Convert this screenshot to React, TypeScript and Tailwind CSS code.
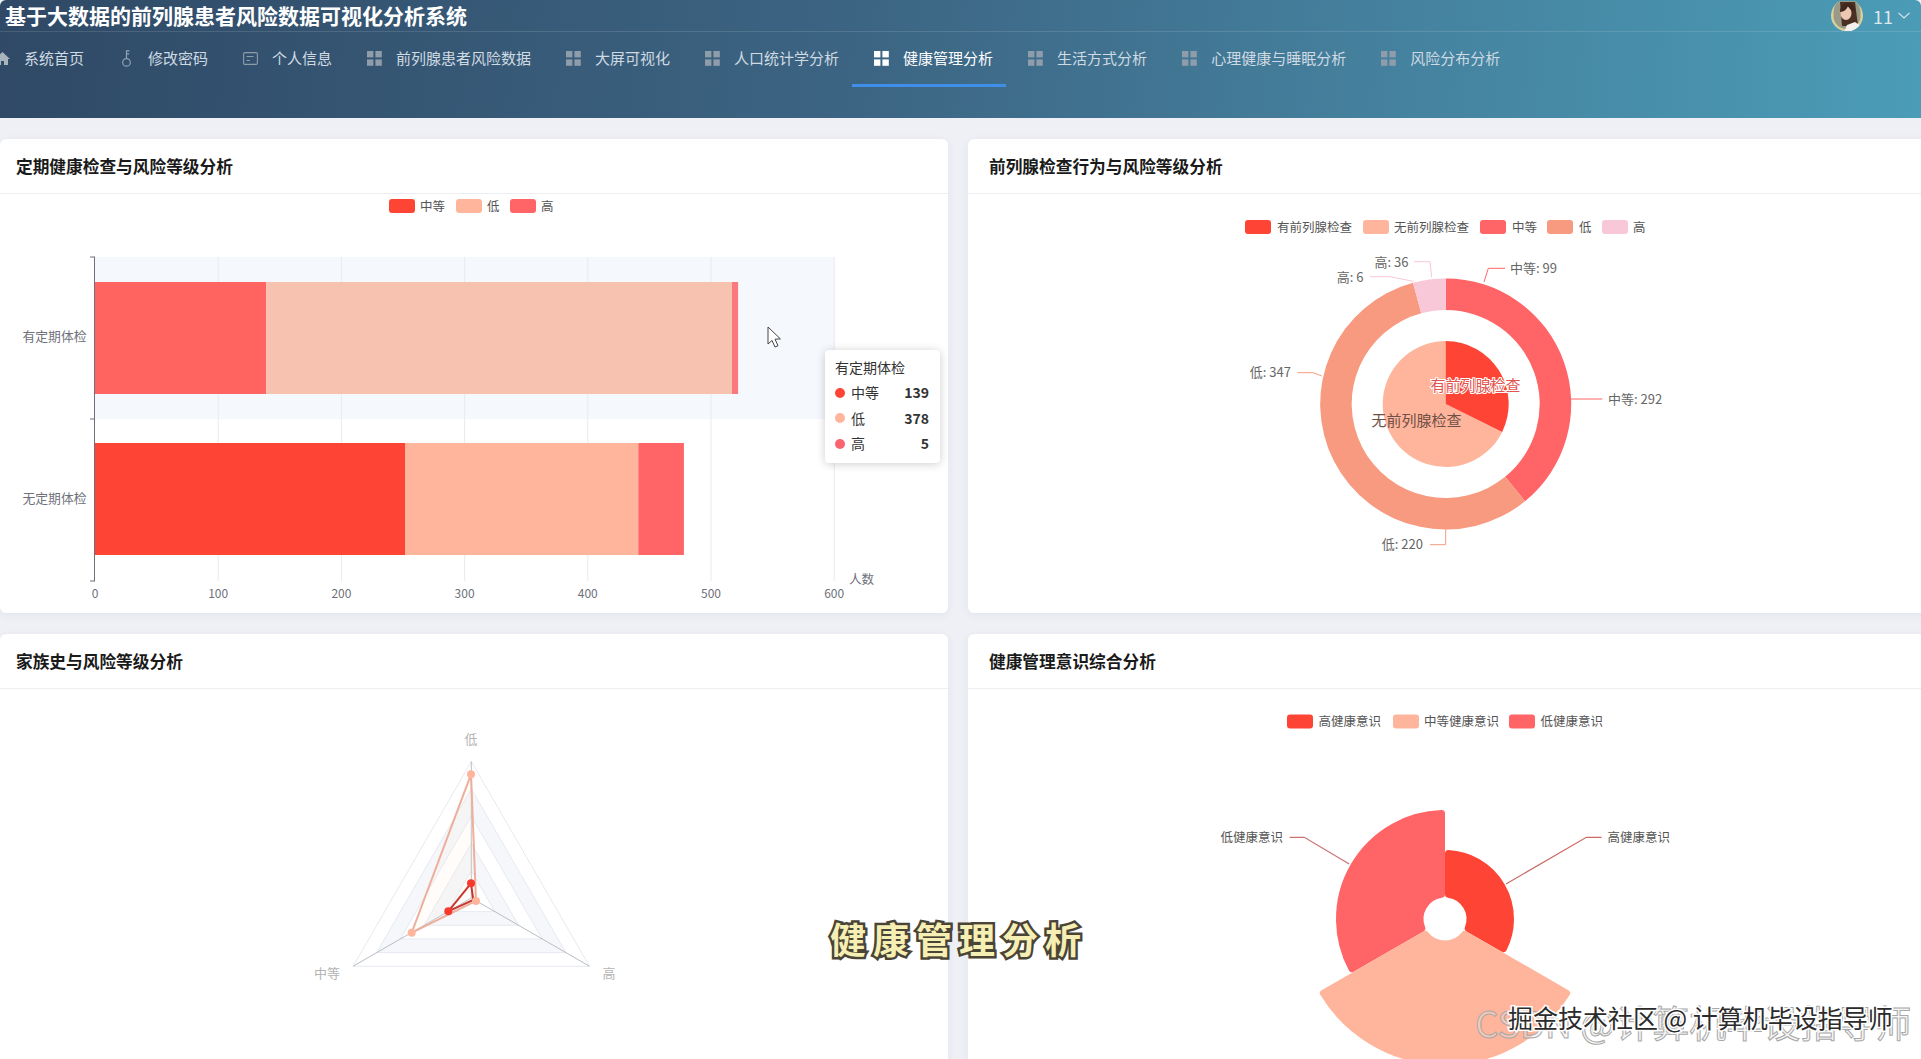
import type { ReactNode } from "react";

const RED = "#fe4535";
const SALMON = "#ffb59c";
const CORAL = "#ff6466";
const ORANGE = "#f79a7f";
const PINK = "#f9c8d8";
const AXIS = "#6e7079";

// angle in degrees, clockwise from twelve o'clock
function polar(cx: number, cy: number, r: number, deg: number) {
  const a = (deg * Math.PI) / 180;
  return [cx + r * Math.sin(a), cy - r * Math.cos(a)];
}

function ring(cx: number, cy: number, r0: number, r1: number, a0: number, a1: number) {
  const large = a1 - a0 > 180 ? 1 : 0;
  const [x0, y0] = polar(cx, cy, r1, a0);
  const [x1, y1] = polar(cx, cy, r1, a1);
  if (r0 === 0) return `M${cx} ${cy}L${x0} ${y0}A${r1} ${r1} 0 ${large} 1 ${x1} ${y1}Z`;
  const [x2, y2] = polar(cx, cy, r0, a1);
  const [x3, y3] = polar(cx, cy, r0, a0);
  return `M${x0} ${y0}A${r1} ${r1} 0 ${large} 1 ${x1} ${y1}L${x2} ${y2}A${r0} ${r0} 0 ${large} 0 ${x3} ${y3}Z`;
}

// shrunk sector, stroked with a round join by the caller to get soft corners
function softSector(cx: number, cy: number, r0: number, r1: number, a0: number, a1: number, d: number) {
  const inner = r0 + d;
  const outer = r1 - d;
  const edge = (r: number, deg: number, side: number) => {
    const along = Math.sqrt(r * r - d * d);
    const [x, y] = polar(cx, cy, along, deg);
    const [nx, ny] = polar(0, 0, d, deg + side * 90);
    return [x + nx, y + ny];
  };
  const p0 = edge(outer, a0, 1);
  const p1 = edge(outer, a1, -1);
  const p2 = edge(inner, a1, -1);
  const p3 = edge(inner, a0, 1);
  return `M${p0[0]} ${p0[1]}A${outer} ${outer} 0 0 1 ${p1[0]} ${p1[1]}L${p2[0]} ${p2[1]}A${inner} ${inner} 0 0 0 ${p3[0]} ${p3[1]}Z`;
}

function tri(cx: number, cy: number, r: number) {
  return [0, 120, 240].map((a) => polar(cx, cy, r, a).join(",")).join(" ");
}

function Legend({ items, y, textY }: { items: { x: number; tx: number; color: string; label: string }[]; y: number; textY: number }) {
  return (
    <g>
      {items.map((it) => (
        <g key={it.label}>
          <rect x={it.x} y={y} width={26} height={14} rx={3} fill={it.color} />
          <text x={it.tx} y={textY} fontSize={12.5} fill="#555" dominantBaseline="central">
            {it.label}
          </text>
        </g>
      ))}
    </g>
  );
}

function GridIcon({ active }: { active?: boolean }) {
  return (
    <svg width="15" height="15" viewBox="0 0 15 15" className="shrink-0" fill={active ? "#ffffff" : "#8f9caa"}>
      <rect x="0" y="0" width="6.4" height="6.4" />
      <rect x="8.4" y="0" width="6.4" height="6.4" />
      <rect x="0" y="8.4" width="6.4" height="6.4" />
      <rect x="8.4" y="8.4" width="6.4" height="6.4" />
    </svg>
  );
}

function HomeIcon() {
  return (
    <svg width="15" height="15" viewBox="0 0 15 15" className="shrink-0" fill="#a9b3bc">
      <path d="M7.5 1 15 8h-2v6H9V10H6v4H2V8H0Z" />
    </svg>
  );
}

function KeyIcon() {
  return (
    <svg width="15" height="17" viewBox="0 0 15 17" className="shrink-0" fill="none" stroke="#8fa2b5" strokeWidth="1.2">
      <circle cx="7.5" cy="12.4" r="3.8" />
      <path d="M7.5 8.6V.8h3M7.5 3.8h2.6" />
    </svg>
  );
}

function CardIcon() {
  return (
    <svg width="15" height="13" viewBox="0 0 15 13" className="shrink-0" fill="none" stroke="#8f9caa" strokeWidth="1.1">
      <rect x=".6" y=".6" width="13.8" height="11.8" rx="1.4" />
      <path d="M3.5 4.5h7M3.5 8.5h3.5" />
    </svg>
  );
}

const navItems: { label: string; icon: ReactNode; active?: boolean }[] = [
  { label: "系统首页", icon: <HomeIcon /> },
  { label: "修改密码", icon: <KeyIcon /> },
  { label: "个人信息", icon: <CardIcon /> },
  { label: "前列腺患者风险数据", icon: <GridIcon /> },
  { label: "大屏可视化", icon: <GridIcon /> },
  { label: "人口统计学分析", icon: <GridIcon /> },
  { label: "健康管理分析", icon: <GridIcon active />, active: true },
  { label: "生活方式分析", icon: <GridIcon /> },
  { label: "心理健康与睡眠分析", icon: <GridIcon /> },
  { label: "风险分布分析", icon: <GridIcon /> },
];

function Avatar() {
  return (
    <svg width="32" height="30" viewBox="0 0 32 30" className="shrink-0">
      <clipPath id="avatar-clip">
        <circle cx="16" cy="14.5" r="16" />
      </clipPath>
      <g clipPath="url(#avatar-clip)">
        <rect x="0" y="-2" width="32" height="33" fill="#d8d29a" />
        <rect x="2.5" y="-2" width="27" height="30" rx="13" fill="#9a9a86" />
        <path d="M9 1h15l3 24H11Z" fill="#4b3024" />
        <ellipse cx="15" cy="12" rx="5.5" ry="7" fill="#eec7b2" />
        <path d="M9 11c0-6 4-9 8-9 4 0 7 3 7 8-3 0-6-2-7-5-1 3-4 6-8 6Z" fill="#3f281e" />
        <path d="M13 31l3-7 8-3 6 4v6Z" fill="#f4f1ee" />
      </g>
    </svg>
  );
}

function Header() {
  return (
    <header className="h-[118px] shrink-0 rounded-t-[6px] bg-[linear-gradient(95deg,#2f4966_0%,#3c6583_45%,#447f9c_70%,#4b9cb7_100%)]">
      <div className="flex h-[32px] items-center justify-between border-b border-[#ffffff1f]">
        <h1 className="pl-[5px] text-[21px] leading-none font-bold text-white">基于大数据的前列腺患者风险数据可视化分析系统</h1>
        <div className="flex items-center pr-[11px] text-[#dbe9ef]">
          <Avatar />
          <span className="ml-[10px] text-[18px] leading-none">11</span>
          <svg width="12" height="7" viewBox="0 0 12 7" fill="none" stroke="currentColor" strokeWidth="1.1" className="ml-[5px]">
            <path d="M.5.8 6 6l5.5-5.2" />
          </svg>
        </div>
      </div>
      <nav className="-ml-[27px] flex h-[55px]">
        {navItems.map((item) => (
          <a
            key={item.label}
            className={`flex items-center gap-[14px] border-b-[3px] pr-[13px] pl-[22px] text-[15px] whitespace-nowrap ${
              item.active ? "border-[#3f8fe8] text-white" : "border-transparent text-[#cfdae2]"
            }`}
          >
            {item.icon}
            {item.label}
          </a>
        ))}
      </nav>
    </header>
  );
}

function Card({ title, children, pad }: { title: string; children: ReactNode; pad: string }) {
  return (
    <section className="relative rounded-[6px] bg-white shadow-[0_2px_10px_rgba(40,50,80,0.06)]">
      <div className={`flex h-[55px] items-center border-b border-[#eceef2] pt-[2px] text-[16.7px] font-bold text-[#1a1a1a] ${pad}`}>{title}</div>
      {children}
    </section>
  );
}

const ticks = [0, 100, 200, 300, 400, 500, 600];
const tickX = (v: number) => 95 + v * 1.232;

function BarChart() {
  const rows = [
    {
      y: 283,
      label: "有定期体检",
      ly: 336,
      segs: [
        { from: 0, to: 139, fill: "#ff6460" },
        { from: 139, to: 517, fill: "#f7c3b0" },
        { from: 517, to: 522, fill: "#f9797c" },
      ],
    },
    {
      y: 444,
      label: "无定期体检",
      ly: 498,
      segs: [
        { from: 0, to: 252, fill: RED },
        { from: 252, to: 441, fill: SALMON },
        { from: 441, to: 478, fill: CORAL },
      ],
    },
  ];
  return (
    <svg viewBox="0 195 948 419" className="block h-[419px] w-[948px]">
      <Legend
        y={200}
        textY={206}
        items={[
          { x: 389, tx: 420, color: RED, label: "中等" },
          { x: 456, tx: 487, color: SALMON, label: "低" },
          { x: 510, tx: 541, color: CORAL, label: "高" },
        ]}
      />
      <rect x={95} y={258} width={739} height={162} fill="#f5f8fd" />
      {ticks.slice(1).map((t) => (
        <line key={t} x1={tickX(t)} x2={tickX(t)} y1={258} y2={582} stroke="#e8eaef" />
      ))}
      {rows.map((r) =>
        r.segs.map((s) => (
          <rect key={`${r.y}-${s.from}`} x={tickX(s.from)} y={r.y} width={(s.to - s.from) * 1.232} height={112} fill={s.fill} />
        )),
      )}
      <path d="M94.5 258V582M90 258h5M90 420h5M90 582h5" fill="none" stroke={AXIS} />
      {rows.map((r) => (
        <text key={r.label} x={86.5} y={r.ly} fontSize={12.8} fill={AXIS} textAnchor="end" dominantBaseline="central">
          {r.label}
        </text>
      ))}
      {ticks.map((t) => (
        <text key={t} x={tickX(t)} y={593} fontSize={12} fill={AXIS} textAnchor="middle" dominantBaseline="central">
          {t}
        </text>
      ))}
      <text x={849} y={579} fontSize={12.5} fill={AXIS} dominantBaseline="central">
        人数
      </text>
      {/* mouse pointer caught in the recording */}
      <path d="M768 328v17l4-3.6 3 6.6 3-1.3-3-6.5 5.4-.3Z" fill="#fff" stroke="#444" strokeWidth="1" strokeLinejoin="round" />
    </svg>
  );
}

function BarTooltip() {
  const rows = [
    { name: "中等", value: 139, color: RED },
    { name: "低", value: 378, color: SALMON },
    { name: "高", value: 5, color: "#f9646e" },
  ];
  return (
    <div className="absolute top-[211px] left-[825px] h-[113px] w-[115px] rounded-[4px] bg-white pt-[8px] pr-[11px] pl-[10px] text-[14px] text-[#333] shadow-[0_1px_10px_rgba(0,0,0,0.2)]">
      <div className="h-[19px] leading-[19px]">有定期体检</div>
      <div className="mt-[6px] flex flex-col gap-[6px]">
        {rows.map((r) => (
          <div key={r.name} className="flex h-[19.5px] items-center">
            <span className="h-[10px] w-[10px] rounded-full" style={{ backgroundColor: r.color }} />
            <span className="ml-[6px]">{r.name}</span>
            <span className="ml-auto font-bold">{r.value}</span>
          </div>
        ))}
      </div>
    </div>
  );
}

function CheckChart() {
  const cx = 1445.7;
  const cy = 405;
  const labels = [
    { x: 1510, y: 268, a: "start", t: "中等: 99", line: "1484,283 1488.3,269.3 1505,269.3", c: CORAL },
    { x: 1608, y: 399, a: "start", t: "中等: 292", line: "1571,400 1602.3,400", c: CORAL },
    { x: 1291, y: 372, a: "end", t: "低: 347", line: "1321.7,377 1313.3,373.7 1297.3,373.7", c: ORANGE },
    { x: 1423, y: 544, a: "end", t: "低: 220", line: "1445.7,530 1445.7,545.7 1430,545.7", c: ORANGE },
    { x: 1363.5, y: 277, a: "end", t: "高: 6", line: "1413.3,282.3 1390,277.7 1370,277.7", c: PINK },
    { x: 1408.5, y: 262, a: "end", t: "高: 36", line: "1431.7,278.3 1430,262.7 1414,262.7", c: PINK },
  ];
  return (
    <svg viewBox="968 195 953 419" className="block h-[419px] w-[953px]">
      <Legend
        y={221}
        textY={227}
        items={[
          { x: 1245, tx: 1277, color: RED, label: "有前列腺检查" },
          { x: 1363, tx: 1394, color: SALMON, label: "无前列腺检查" },
          { x: 1480, tx: 1512, color: CORAL, label: "中等" },
          { x: 1547, tx: 1579, color: ORANGE, label: "低" },
          { x: 1602, tx: 1633, color: PINK, label: "高" },
        ]}
      />
      <path d={ring(cx, cy, 94, 125.5, 0, 140.8)} fill={CORAL} />
      <path d={ring(cx, cy, 94, 125.5, 140.8, 344.9)} fill={ORANGE} />
      <path d={ring(cx, cy, 94, 125.5, 344.9, 360)} fill={PINK} />
      <path d={ring(cx, cy, 0, 63, 116.3, 360)} fill={SALMON} />
      <path d={ring(cx, cy, 0, 63, 0, 116.3)} fill={RED} />
      {labels.map((l) => (
        <g key={l.t}>
          <polyline points={l.line} fill="none" stroke={l.c} />
          <text x={l.x} y={l.y} fontSize={13} fill="#666" textAnchor={l.a} dominantBaseline="central">
            {l.t}
          </text>
        </g>
      ))}
      <text x={1430.5} y={385} fontSize={15} fill="#e0554f" stroke="#fff" strokeWidth={2} paintOrder="stroke" dominantBaseline="central">
        有前列腺检查
      </text>
      <text x={1371.5} y={420.5} fontSize={15} fill="#6f5046" dominantBaseline="central">
        无前列腺检查
      </text>
    </svg>
  );
}

function RadarChart() {
  const cx = 471.3;
  const cy = 898;
  const R = 136.5;
  return (
    <svg viewBox="0 689 948 430" className="block h-[430px] w-[948px]">
      <polygon points={tri(cx, cy, R * 0.8)} fill="#f5f7fb" />
      <polygon points={tri(cx, cy, R * 0.6)} fill="#fff" />
      <polygon points={tri(cx, cy, R * 0.4)} fill="#f5f7fb" />
      <polygon points={tri(cx, cy, R * 0.2)} fill="#fff" />
      {[0.2, 0.4, 0.6, 0.8, 1].map((k) => (
        <polygon key={k} points={tri(cx, cy, R * k)} fill="none" stroke="#e6e9f0" />
      ))}
      {[0, 120, 240].map((a) => {
        const [x, y] = polar(cx, cy, R, a);
        return <line key={a} x1={cx} y1={cy} x2={x} y2={y} stroke="#b9bcc4" />;
      })}
      <polygon points="471,774.3 411.7,932.7 476,901" fill="#ffeedd" fillOpacity={0.15} stroke="#eeae9c" strokeWidth={2} />
      <polygon points="471,883.3 448.3,911.3 473.3,900" fill="none" stroke="#c9362e" strokeWidth={2} />
      {[
        [471, 774.3],
        [411.7, 932.7],
        [476, 901],
      ].map(([x, y]) => (
        <circle key={x} cx={x} cy={y} r={4} fill={SALMON} />
      ))}
      {[
        [471, 883.3],
        [448.3, 911.3],
      ].map(([x, y]) => (
        <circle key={x} cx={x} cy={y} r={4} fill="#f83a2e" />
      ))}
      <g fontSize={13} fill="#b4b4b4" dominantBaseline="central" textAnchor="middle">
        <text x={471} y={738}>
          低
        </text>
        <text x={327} y={972.5}>
          中等
        </text>
        <text x={609} y={972.5}>
          高
        </text>
      </g>
    </svg>
  );
}

function RoseChart() {
  const cx = 1445;
  const cy = 919;
  const sectors = [
    { r: 69, a0: 0, a1: 120, fill: RED },
    { r: 109, a0: 240, a1: 360, fill: CORAL },
    { r: 146, a0: 120, a1: 240, fill: SALMON },
  ];
  return (
    <svg viewBox="968 689 953 430" className="block h-[430px] w-[953px]">
      <Legend
        y={714.5}
        textY={720}
        items={[
          { x: 1287, tx: 1318.5, color: RED, label: "高健康意识" },
          { x: 1393, tx: 1424, color: SALMON, label: "中等健康意识" },
          { x: 1509, tx: 1540.5, color: CORAL, label: "低健康意识" },
        ]}
      />
      {sectors.map((s) => (
        <path
          key={s.a0}
          d={softSector(cx, cy, 21.5, s.r, s.a0, s.a1, 3.5)}
          fill={s.fill}
          stroke={s.fill}
          strokeWidth={7}
          strokeLinejoin="round"
        />
      ))}
      <polyline points="1349.2,864 1304.3,837.3 1289.6,837.3" fill="none" stroke="#cf7073" strokeWidth={1.2} />
      <polyline points="1506,884 1586.4,837.3 1601.6,837.3" fill="none" stroke="#c96a64" strokeWidth={1.2} />
      <text x={1283} y={836} fontSize={12.5} fill="#555" textAnchor="end" dominantBaseline="central">
        低健康意识
      </text>
      <text x={1607.5} y={836} fontSize={12.5} fill="#555" dominantBaseline="central">
        高健康意识
      </text>
    </svg>
  );
}

export default function App() {
  return (
    <div className="relative flex h-[1059px] w-[1921px] flex-col overflow-hidden bg-[#eef0f5] font-['Noto_Sans_CJK_SC','Liberation_Sans',sans-serif]">
      <Header />
      <main className="grid grid-cols-[948px_973px] gap-x-[20px] gap-y-[21px] pt-[21px]">
        <Card title="定期健康检查与风险等级分析" pad="pl-[16px]">
          <BarChart />
          <BarTooltip />
        </Card>
        <Card title="前列腺检查行为与风险等级分析" pad="pl-[21px]">
          <CheckChart />
        </Card>
        <Card title="家族史与风险等级分析" pad="pl-[16px]">
          <RadarChart />
        </Card>
        <Card title="健康管理意识综合分析" pad="pl-[21px]">
          <RoseChart />
        </Card>
      </main>

      {/* captions burnt into the recording */}
      <div className="absolute top-[914px] left-[830px] text-[36px] leading-[48px] font-bold tracking-[7px] whitespace-nowrap text-[#f6efb4] [-webkit-text-stroke:5px_#4a4436] [paint-order:stroke_fill]">
        健康管理分析
      </div>
      <div className="absolute top-[1000px] left-[1475px] text-[37px] leading-[44px] whitespace-nowrap text-[#e8e8e866] [-webkit-text-stroke:1px_#a8a8a8]">
        CSDN @计算机毕设指导师
      </div>
      <div className="absolute top-[1000px] left-[1508px] text-[25px] leading-[34px] whitespace-nowrap text-[#2b2b2b] [-webkit-text-stroke:3px_#ffffff] [paint-order:stroke_fill]">
        掘金技术社区 @ 计算机毕设指导师
      </div>
    </div>
  );
}
